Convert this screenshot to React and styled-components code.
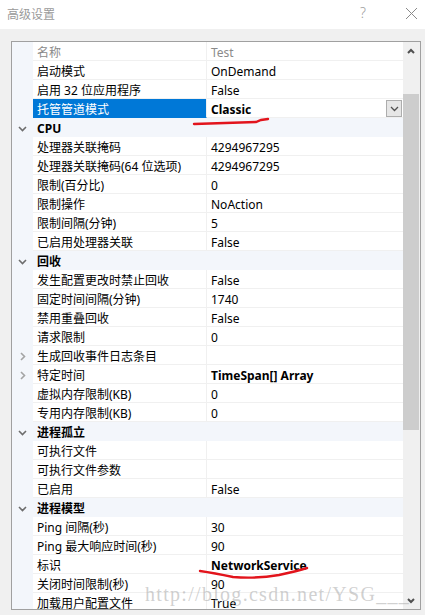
import React from 'react'
import styled, { createGlobalStyle } from 'styled-components'

const Global = createGlobalStyle`
  html, body {
    margin: 0;
    padding: 0;
    background: #f0f0f0;
  }
  body {
    width: 425px;
    height: 615px;
    overflow: hidden;
    font-family: "Noto Sans", "Noto Sans CJK SC", sans-serif;
  }
`

const Window = styled.div`
  position: relative;
  width: 425px;
  height: 615px;
  display: flex;
  flex-direction: column;
  background: #f0f0f0;
`

const TitleBar = styled.div`
  height: 29px;
  background: #ffffff;
  display: flex;
  align-items: center;
  padding: 0 7px;
  box-sizing: border-box;
`

const Title = styled.div`
  flex: 1;
  font-family: "Noto Sans CJK SC", sans-serif;
  font-size: 12px;
  color: #9a9a9a;
  margin-top: -3px;
`

const Help = styled.div`
  font-family: "Noto Sans", sans-serif;
  font-size: 14px;
  font-weight: 300;
  color: #a0a0a0;
  margin-right: 39px;
  margin-top: -4px;
`

const Body = styled.div`
  padding: 12px 4px 0 11px;
`

const Grid = styled.div`
  height: 569px;
  box-sizing: border-box;
  border: 1px solid #a0a0a0;
  display: flex;
  background: #ffffff;
`

const List = styled.div`
  flex: 1;
  overflow: hidden;
`

const Row = styled.div`
  display: flex;
  height: 19px;
  background: ${p => (p.$header ? '#f3f6fb' : '#ffffff')};
`

const Gutter = styled.div`
  width: 21px;
  flex: none;
  background: #f3f6fb;
  display: flex;
  align-items: center;
  justify-content: center;
  padding: 1px 1px 0 0;
  box-sizing: border-box;
`

const Cell = styled.div`
  box-sizing: border-box;
  height: 19px;
  padding-top: 3px;
  line-height: 16px;
  padding-left: 4px;
  font-size: 12px;
  white-space: nowrap;
  overflow: hidden;
  border-bottom: 1px solid #f0f0f0;
`

const NameCell = styled(Cell)`
  width: 174px;
  flex: none;
  border-right: 1px solid #f0f0f0;
  color: ${p => (p.$selected ? '#ffffff' : p.$muted ? '#8a8a8a' : '#000000')};
  background: ${p => (p.$selected ? '#0078d7' : 'transparent')};
  border-bottom-color: ${p => (p.$selected ? '#0078d7' : '#f0f0f0')};
`

const ValueCell = styled(Cell)`
  flex: 1;
  display: flex;
  align-items: flex-start;
  font-weight: ${p => (p.$bold ? 700 : 400)};
  color: ${p => (p.$muted ? '#8a8a8a' : '#000000')};
`

const HeaderCell = styled(Cell)`
  flex: 1;
  font-weight: 700;
  border-bottom: none;
`

const DropButton = styled.div`
  margin-left: auto;
  margin-right: 1px;
  margin-top: -2px;
  width: 16px;
  height: 17px;
  box-sizing: border-box;
  border: 1px solid #adadad;
  background: #e6e6e6;
  display: flex;
  align-items: center;
  justify-content: center;
`

const ScrollBar = styled.div`
  width: 17px;
  flex: none;
  background: #f0f0f0;
  display: flex;
  flex-direction: column;
  align-items: flex-start;
`

const ArrowBox = styled.div`
  width: 16px;
  height: 17px;
  display: flex;
  align-items: center;
  justify-content: center;
`

const Track = styled.div`
  flex: 1;
  width: 16px;
`

const Thumb = styled.div`
  margin-top: 35px;
  width: 16px;
  height: 336px;
  background: #cdcdcd;
`

const Watermark = styled.div`
  position: absolute;
  left: 145px;
  top: 583px;
  font-family: "Liberation Serif", serif;
  font-size: 20px;
  letter-spacing: 1.3px;
  color: rgba(170, 170, 170, 0.55);
  white-space: nowrap;
  pointer-events: none;
`

const Marks = styled.svg`
  position: absolute;
  left: 0;
  top: 0;
  pointer-events: none;
`

const Chevron = ({ open }) => (
  <svg width="9" height="9" viewBox="0 0 9 9">
    {open ? (
      <polyline points="1,3 4.5,6.5 8,3" fill="none" stroke="#6d6d6d" strokeWidth="1.6" />
    ) : (
      <polyline points="3,1 6.5,4.5 3,8" fill="none" stroke="#a4a4a4" strokeWidth="1.6" />
    )}
  </svg>
)

const rows = [
  { name: '名称', value: 'Test', muted: true },
  { name: '启动模式', value: 'OnDemand' },
  { name: '启用 32 位应用程序', value: 'False' },
  { name: '托管管道模式', value: 'Classic', bold: true, selected: true },
  { header: 'CPU' },
  { name: '处理器关联掩码', value: '4294967295' },
  { name: '处理器关联掩码(64 位选项)', value: '4294967295' },
  { name: '限制(百分比)', value: '0' },
  { name: '限制操作', value: 'NoAction' },
  { name: '限制间隔(分钟)', value: '5' },
  { name: '已启用处理器关联', value: 'False' },
  { header: '回收' },
  { name: '发生配置更改时禁止回收', value: 'False' },
  { name: '固定时间间隔(分钟)', value: '1740' },
  { name: '禁用重叠回收', value: 'False' },
  { name: '请求限制', value: '0' },
  { name: '生成回收事件日志条目', value: '', expand: true },
  { name: '特定时间', value: 'TimeSpan[] Array', bold: true, expand: true },
  { name: '虚拟内存限制(KB)', value: '0' },
  { name: '专用内存限制(KB)', value: '0' },
  { header: '进程孤立' },
  { name: '可执行文件', value: '' },
  { name: '可执行文件参数', value: '' },
  { name: '已启用', value: 'False' },
  { header: '进程模型' },
  { name: 'Ping 间隔(秒)', value: '30' },
  { name: 'Ping 最大响应时间(秒)', value: '90' },
  { name: '标识', value: 'NetworkService', bold: true },
  { name: '关闭时间限制(秒)', value: '90' },
  { name: '加载用户配置文件', value: 'True' },
]

const PropRow = ({ r }) => {
  if (r.header) {
    return (
      <Row $header>
        <Gutter><Chevron open /></Gutter>
        <HeaderCell>{r.header}</HeaderCell>
      </Row>
    )
  }
  return (
    <Row>
      <Gutter>{r.expand && <Chevron />}</Gutter>
      <NameCell $selected={r.selected} $muted={r.muted}>{r.name}</NameCell>
      <ValueCell $bold={r.bold} $muted={r.muted}>
        {r.value}
        {r.selected && (
          <DropButton>
            <svg width="9" height="6" viewBox="0 0 9 6">
              <polyline points="1,1 4.5,4.5 8,1" fill="none" stroke="#505050" strokeWidth="1.3" />
            </svg>
          </DropButton>
        )}
      </ValueCell>
    </Row>
  )
}

export default function App() {
  return (
    <Window>
      <Global />
      <TitleBar>
        <Title>高级设置</Title>
        <Help>?</Help>
        <svg width="13" height="13" viewBox="0 0 13 13" style={{ marginTop: -3 }}>
          <path d="M1 1 L12 12 M12 1 L1 12" stroke="#8a8a8a" strokeWidth="1" />
        </svg>
      </TitleBar>
      <Body>
        <Grid>
          <List>
            {rows.map((r, i) => <PropRow key={i} r={r} />)}
          </List>
          <ScrollBar>
            <ArrowBox>
              <svg width="8" height="6" viewBox="0 0 8 6">
                <polyline points="1,5 4,2 7,5" fill="none" stroke="#505050" strokeWidth="2" />
              </svg>
            </ArrowBox>
            <Track><Thumb /></Track>
            <ArrowBox>
              <svg width="8" height="6" viewBox="0 0 8 6">
                <polyline points="1,1 4,4 7,1" fill="none" stroke="#505050" strokeWidth="2" />
              </svg>
            </ArrowBox>
          </ScrollBar>
        </Grid>
      </Body>
      <Watermark>http://blog.csdn.net/YSG___</Watermark>
      <Marks width="425" height="615">
        <path d="M194 124 Q225 123 256 122 L261 120 L268 119" fill="none" stroke="#e2141c" strokeWidth="2.4" strokeLinecap="round" />
        <path d="M200 571 Q214 573 233 577 Q256 579 279 575 Q298 571 307 568" fill="none" stroke="#e2141c" strokeWidth="2.4" strokeLinecap="round" />
      </Marks>
    </Window>
  )
}
